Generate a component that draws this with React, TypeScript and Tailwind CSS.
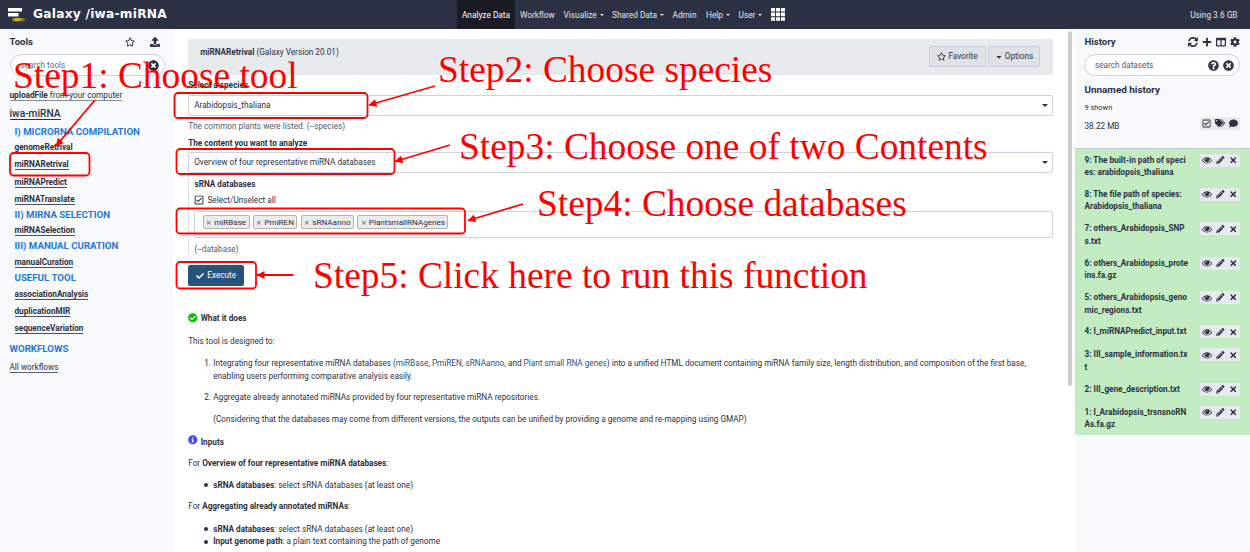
import type { ReactNode } from "react";
import {
  FaRegStar, FaUpload, FaTimesCircle, FaPlus, FaColumns, FaCog, FaQuestionCircle,
  FaRegCheckSquare, FaTags, FaComment, FaPencilAlt, FaTimes, FaCheck, FaCaretDown,
  FaCheckCircle, FaInfoCircle,
} from "react-icons/fa";

const Eye = () => (
  <svg viewBox="0 0 1792 1792" className="size-[10px]" fill="currentColor">
    <path d="M1664 960q-152-236-381-353 61 104 61 225 0 185-131.5 316.5t-316.5 131.5-316.5-131.5-131.5-316.5q0-121 61-225-229 117-381 353 133 205 333.5 326.5t434.5 121.5 434.5-121.5 333.5-326.5zm-720-384q0-20-14-34t-34-14q-125 0-214.5 89.5t-89.5 214.5q0 20 14 34t34 14 34-14 14-34q0-86 61-147t147-61q20 0 34-14t14-34zm848 384q0 34-20 69-140 230-376.5 368.5t-499.5 138.5-499.5-139-376.5-368q-20-35-20-69t20-69q140-229 376.5-368t499.5-139 499.5 139 376.5 368q20 35 20 69z" />
  </svg>
);

const Refresh = () => (
  <svg viewBox="0 0 1536 1536" className="size-[10px]" fill="currentColor">
    <path d="M1511 928q0 5-1 7-64 268-268 434.5t-478 166.5q-146 0-282.5-55t-243.5-157l-129 129q-19 19-45 19t-45-19-19-45v-448q0-26 19-45t45-19h448q26 0 45 19t19 45-19 45l-137 137q71 66 161 102t187 36q134 0 250-65t186-179q11-17 53-117 8-23 30-23h192q13 0 22.5 9.5t9.5 22.5zm25-800v448q0 26-19 45t-45 19h-448q-26 0-45-19t-19-45 19-45l138-138q-148-137-349-137-134 0-250 65t-186 179q-11 17-53 117-8 23-30 23h-199q-13 0-22.5-9.5t-9.5-22.5v-7q65-268 270-434.5t480-166.5q146 0 284 55.5t245 156.5l130-129q19-19 45-19t45 19 19 45z" />
  </svg>
);

function NavItem({ children, caret, w }: { children: ReactNode; caret?: boolean; w: string }) {
  return (
    <div className={`flex items-center gap-[3px] ${w}`}>
      {children}
      {caret && <span className="mt-[-1px] border-x-2 border-t-2 border-x-transparent border-t-current" />}
    </div>
  );
}

function Masthead() {
  return (
    <header className="flex h-[29px] shrink-0 items-center bg-[#2c3143] text-[8.3px] text-[#e4e6ea]">
      <div className="flex w-[457px] items-center pl-2">
        <svg viewBox="0 0 17 15" className="h-[15px] w-[17px]">
          <defs>
            <linearGradient id="gold">
              <stop offset="0" stopColor="#5f5a38" />
              <stop offset=".3" stopColor="#d8b92c" />
              <stop offset=".6" stopColor="#c4a82c" />
              <stop offset="1" stopColor="#55503a" />
            </linearGradient>
          </defs>
          <path d="M0 1h14v3.5H0zM0 6h10.500v3.5H0z" fill="#fff" />
          <path d="M4 11h13V14.300H4z" fill="url(#gold)" />
        </svg>
        <h1 className="ml-2 font-['DejaVu_Sans'] text-[12.2px] font-bold tracking-[0.25px] whitespace-nowrap text-white">Galaxy /iwa-miRNA</h1>
      </div>
      <nav className="flex h-full items-center whitespace-nowrap">
        <div className="flex h-full w-[58px] items-center justify-center bg-[#1a1c24] pt-px text-white">Analyze Data</div>
        <NavItem w="ml-[5px] w-[43.5px] pt-px">Workflow</NavItem>
        <NavItem w="w-[48.5px] pt-px" caret>Visualize</NavItem>
        <NavItem w="w-[60.5px] pt-px" caret>Shared Data</NavItem>
        <NavItem w="w-[33.5px] pt-px">Admin</NavItem>
        <NavItem w="w-[32.5px] pt-px" caret>Help</NavItem>
        <NavItem w="w-[32.5px] pt-px" caret>User</NavItem>
        <svg viewBox="0 0 14 13" className="h-[13px] w-[14px]" fill="#fff">
          {[0, 5, 10].map((x) => [0, 4.6, 9.2].map((y) => <rect key={`${x}-${y}`} x={x} y={y} width="4.1" height="3.6" rx=".4" />))}
        </svg>
      </nav>
      <div className="ml-auto pt-[2px] pr-[12.5px]">Using 3.6 GB</div>
    </header>
  );
}

function Heading({ h, children }: { h: string; children: ReactNode }) {
  return <h3 className={`flex items-center pt-[1.5px] pl-[5px] text-[9.7px] font-bold text-[#2478dc] ${h}`}>{children}</h3>;
}

function Tool({ h, children }: { h: string; children: ReactNode }) {
  return (
    <div className={`flex items-center pt-[2px] pl-[5px] font-bold ${h}`}>
      <span className="border-b border-[#4b5060] leading-[9px]">{children}</span>
    </div>
  );
}

function ToolPanel() {
  return (
    <aside className="w-[174px] shrink-0 bg-[#f8f9fb] pl-[9.5px] whitespace-nowrap">
      <div className="flex h-[25px] items-center pt-[1px] pr-[14.5px]">
        <h2 className="text-[9.6px] font-bold">Tools</h2>
        <FaRegStar className="ml-auto size-[10px]" />
        <FaUpload className="ml-[15px] size-[10px]" />
      </div>
      <div className="flex h-[22px] w-[155px] items-center rounded-full border border-[#ced2e0] bg-white pl-[10px] text-[#666b7a]">
        search tools
        <FaTimesCircle className="mr-[5px] ml-auto size-[11px] text-[#2c3143]" />
      </div>
      <div className="mt-[11px] flex h-4 items-center pt-[2px]">
        <span className="border-b border-[#8a8e9a] leading-[9px]"><b>uploadFile</b> from your computer</span>
      </div>
      <div className="mt-[2px] flex h-[18px] items-center pt-px text-[10.2px]">
        <span className="border-b border-[#2c3143] leading-[10px] font-medium">iwa-miRNA</span>
      </div>
      <Heading h="h-[17px]">I) MICRORNA COMPILATION</Heading>
      <Tool h="h-[14px]">genomeRetrival</Tool>
      <Tool h="h-[19px]">miRNARetrival</Tool>
      <Tool h="h-[17px]">miRNAPredict</Tool>
      <Tool h="h-[17px]">miRNATranslate</Tool>
      <Heading h="h-[15px]">II) MIRNA SELECTION</Heading>
      <Tool h="h-4">miRNASelection</Tool>
      <Heading h="h-4">III) MANUAL CURATION</Heading>
      <Tool h="h-4">manualCuration</Tool>
      <Heading h="h-4">USEFUL TOOL</Heading>
      <Tool h="h-4">associationAnalysis</Tool>
      <Tool h="h-[18px]">duplicationMIR</Tool>
      <Tool h="h-4">sequenceVariation</Tool>
      <h3 className="flex h-[26px] items-center pt-px text-[9.7px] font-bold text-[#2478dc]">WORKFLOWS</h3>
      <div className="mt-px flex h-[10px] items-center">
        <span className="border-b border-[#5c6070] leading-[9px]">All workflows</span>
      </div>
    </aside>
  );
}

function Select({ children }: { children: ReactNode }) {
  return (
    <div className="flex h-[21px] items-center justify-between rounded-[2px] border border-[#cfd1e0] bg-white pr-[4px] pl-[5px]">
      {children}
      <span className="border-x-[3px] border-t-[3px] border-x-transparent border-t-[#2c3143]" />
    </div>
  );
}

function Tag({ children }: { children: ReactNode }) {
  return (
    <span className="flex h-[14px] items-center gap-[2.5px] rounded-[2px] border border-[#b4b4b4] bg-[#ebebeb] px-[2.5px]">
      <FaTimes className="mt-px size-[5.5px] text-[#888]" />
      {children}
    </span>
  );
}

const Link = ({ children }: { children: ReactNode }) => <span className="text-[#25537b]">{children}</span>;

function Bullet({ children }: { children: ReactNode }) {
  return (
    <li className="flex h-[12.5px] items-center pl-4">
      <span className="mr-[5px] size-[4px] rounded-full bg-[#2c3143]" />
      <span>{children}</span>
    </li>
  );
}

function Help() {
  return (
    <section className="mt-6 leading-[12.5px] whitespace-nowrap">
      <h4 className="flex h-4 items-center gap-[3px] font-bold">
        <FaCheckCircle className="size-[9.5px] text-[#00c000]" />What it does
      </h4>
      <p className="mt-2 flex h-[14px] items-center">This tool is designed to:</p>
      <ol className="mt-[9px] pl-4">
        <li className="flex">
          <span className="w-[9px]">1.</span>
          <span>
            Integrating four representative miRNA databases (<Link>miRBase</Link>, <Link>PmiREN</Link>, <Link>sRNAanno</Link>, and <Link>Plant small RNA genes</Link>) into a unified HTML document containing miRNA family size, length distribution, and composition of the first base,
            <br />enabling users performing comparative analysis easily.
          </span>
        </li>
        <li className="mt-[9px] flex">
          <span className="w-[9px]">2.</span>
          <div>
            <p>Aggregate already annotated miRNAs provided by four representative miRNA repositories.</p>
            <p className="mt-[9.5px]">(Considering that the databases may come from different versions, the outputs can be unified by providing a genome and re-mapping using GMAP)</p>
          </div>
        </li>
      </ol>
      <h4 className="mt-2 flex h-4 items-center gap-[3px] pt-px font-bold">
        <FaInfoCircle className="-mt-[4px] size-[9.5px] text-[#4b4bf5]" />Inputs
      </h4>
      <p className="mt-[7px]">For <b>Overview of four representative miRNA databases</b>:</p>
      <ul className="mt-[9.8px]"><Bullet><b>sRNA databases</b>: select sRNA databases (at least one)</Bullet></ul>
      <p className="mt-[9.2px]">For <b>Aggregating already annotated miRNAs</b>:</p>
      <ul className="mt-[10px]">
        <Bullet><b>sRNA databases</b>: select sRNA databases (at least one)</Bullet>
        <Bullet><b>Input genome path</b>: a plain text containing the path of genome</Bullet>
      </ul>
    </section>
  );
}

function ToolForm() {
  return (
    <main className="flex min-w-0 flex-1 bg-white">
      <div className="w-[879px] pt-[10px] pl-[14.2px] whitespace-nowrap">
        <div className="flex h-9 rounded-[2px] bg-[#e6eaed] pt-[7px] pr-[13px] pl-3">
          <p className="leading-[13px]"><b>miRNARetrival</b> (Galaxy Version 20.01)</p>
          <div className="ml-auto flex h-[21px] gap-[2px]">
            <button className="flex w-[57px] items-center justify-center gap-[2px] rounded-[2px] border border-[#c9cddd] bg-[#dee2e6]">
              <FaRegStar className="size-[9px]" />Favorite
            </button>
            <button className="flex w-[52px] items-center justify-center gap-[2px] rounded-[2px] border border-[#c9cddd] bg-[#dee2e6]">
              <FaCaretDown className="size-[8px]" />Options
            </button>
          </div>
        </div>
        <label className="flex h-5 items-center font-bold">Select a species</label>
        <Select>Arabidopsis_thaliana</Select>
        <p className="flex h-[20px] items-center text-[#555a6a]">The common plants were listed. (--species)</p>
        <label className="flex h-[16px] items-center pt-[2px] pb-[3px] font-bold">The content you want to analyze</label>
        <Select>Overview of four representative miRNA databases</Select>
        <div className="mt-[5px] ml-[.3px] h-[76px] border-l-[1.5px] border-[#dddfe8] pl-[5px]">
          <label className="flex h-[13px] items-center font-bold">sRNA databases</label>
          <div className="mt-[2px] flex h-[14px] items-center gap-[3.5px]"><FaRegCheckSquare className="-ml-[.5px] size-[10px]" />Select/Unselect all</div>
          <div className="mt-1 flex h-[27px] items-start gap-[3.3px] rounded-[2px] border border-[#cfd1e0] pt-[3px] pl-[7.2px] text-[8.1px]">
            <Tag>miRBase</Tag><Tag>PmiREN</Tag><Tag>sRNAanno</Tag><Tag>PlantsmallRNAgenes</Tag>
          </div>
          <p className="mt-[4px] flex h-[14px] items-center text-[#555a6a]">(--database)</p>
        </div>
        <button className="mt-[11px] flex h-[21px] w-14 items-center justify-center gap-[3px] rounded-[2px] bg-[#25537b] text-white">
          <FaCheck className="size-2" />Execute
        </button>
        <Help />
      </div>
      <div className="ml-auto w-[7px]"><div className="mt-[2px] h-[355px] w-1 rounded-full bg-[#cdcdcd]" /></div>
    </main>
  );
}

const datasets = [
  ["9: The built-in path of speci", "es: arabidopsis_thaliana"],
  ["8: The file path of species:", "Arabidopsis_thaliana"],
  ["7: others_Arabidopsis_SNP", "s.txt"],
  ["6: others_Arabidopsis_prote", "ins.fa.gz"],
  ["5: others_Arabidopsis_geno", "mic_regions.txt"],
  ["4: I_miRNAPredict_input.txt"],
  ["3: III_sample_information.tx", "t"],
  ["2: III_gene_description.txt"],
  ["1: I_Arabidopsis_trsnsnoRN", "As.fa.gz"],
];

function History() {
  return (
    <aside className="w-[175px] shrink-0 bg-[#f8f9fb] whitespace-nowrap">
      <div className="pr-[10.5px] pl-[9.5px]">
        <div className="flex h-[25px] items-center pt-[1px]">
          <h2 className="text-[9.6px] font-bold">History</h2>
          <div className="ml-auto flex items-center gap-1">
            <Refresh /><FaPlus className="size-[10px]" /><FaColumns className="size-[10px]" /><FaCog className="size-[10px]" />
          </div>
        </div>
        <div className="-ml-[.5px] flex h-[22px] items-center rounded-full border border-[#ced2e0] bg-white pr-[5px] pl-[10px] text-[#555a6a]">
          search datasets
          <FaQuestionCircle className="ml-auto size-[11px] text-[#343a50]" />
          <FaTimesCircle className="ml-[4px] size-[11px] text-[#343a50]" />
        </div>
        <h3 className="mt-[5px] flex h-[17px] items-center pt-px text-[9.9px] font-bold">Unnamed history</h3>
        <p className="mt-[2px] flex h-[15px] items-center pt-px text-[7.4px]">9 shown</p>
        <div className="mt-[2px] flex h-4 items-center justify-between pt-[2px]">
          38.22 MB
          <div className="-mt-[6px] flex h-[13px] w-[39.5px] items-center justify-around rounded-[1px] bg-[#e6e9ee]">
            <FaRegCheckSquare className="size-[9px]" /><FaTags className="size-[10px]" /><FaComment className="size-[9px]" />
          </div>
        </div>
      </div>
      <ul className="mt-[14.5px] border-t border-[#c2ccd4] bg-[#c3ebc1]">
        {datasets.map(([a, b]) => (
          <li key={a} className={`flex justify-between pt-[5px] pr-[10.5px] pl-[9.5px] font-bold ${b ? "h-[34.4px]" : "h-[23px]"}`}>
            <span className="leading-[12.5px]">{a}{b && <><br />{b}</>}</span>
            <span className="flex h-[13px] w-[39.5px] items-center justify-around rounded-[1px] bg-[#e6e9ee]">
              <Eye /><FaPencilAlt className="size-[8.5px]" /><FaTimes className="size-[8.5px]" />
            </span>
          </li>
        ))}
      </ul>
    </aside>
  );
}

function Note({ pos, children }: { pos: string; children: ReactNode }) {
  return <div className={`absolute font-['Liberation_Serif'] text-[37.4px] leading-[37px] whitespace-nowrap text-[#ff0000] ${pos}`}>{children}</div>;
}

function Annotations() {
  return (
    <div className="pointer-events-none absolute inset-0">
      <svg viewBox="0 0 1250 552" className="absolute inset-0 h-[552px] w-[1250px]" fill="none" stroke="#ff0000" strokeWidth="1.8">
        <defs>
          <marker id="tip" viewBox="0 0 8 6" refX="7.5" refY="3" markerWidth="8" markerHeight="8" markerUnits="userSpaceOnUse" orient="auto" preserveAspectRatio="none">
            <path d="M0 0L8 3L0 6z" fill="#ff0000" stroke="none" />
          </marker>
        </defs>
        <rect x="10" y="153" width="79.5" height="22.5" rx="3.5" />
        <rect x="174.5" y="93" width="193" height="25" rx="3.5" />
        <rect x="176.5" y="149" width="218" height="25" rx="3.5" />
        <rect x="176.5" y="208.5" width="288.5" height="25" rx="3.5" />
        <rect x="176.5" y="262" width="79.5" height="26.5" rx="3.5" />
        <path d="M95 100L56 146" markerEnd="url(#tip)" />
        <path d="M435 86L369 105" markerEnd="url(#tip)" />
        <path d="M450 145L395 161.500" markerEnd="url(#tip)" />
        <path d="M523 204L468 220.500" markerEnd="url(#tip)" />
        <path d="M293.500 275H257" markerEnd="url(#tip)" />
      </svg>
      <Note pos="left-[13px] top-[57px]">Step1: Choose tool</Note>
      <Note pos="left-[438px] top-[51px]">Step2: Choose species</Note>
      <Note pos="left-[459px] top-[128px]">Step3: Choose one of two Contents</Note>
      <Note pos="left-[537px] top-[185px]">Step4: Choose databases</Note>
      <Note pos="left-[313px] top-[257px]">Step5: Click here to run this function</Note>
    </div>
  );
}

export default function App() {
  return (
    <div className="relative flex h-[552px] w-[1250px] flex-col overflow-hidden font-['Roboto',sans-serif] text-[8.21px] text-[#2c3143]">
      <Masthead />
      <div className="flex min-h-0 flex-1">
        <ToolPanel />
        <ToolForm />
        <History />
      </div>
      <Annotations />
    </div>
  );
}
